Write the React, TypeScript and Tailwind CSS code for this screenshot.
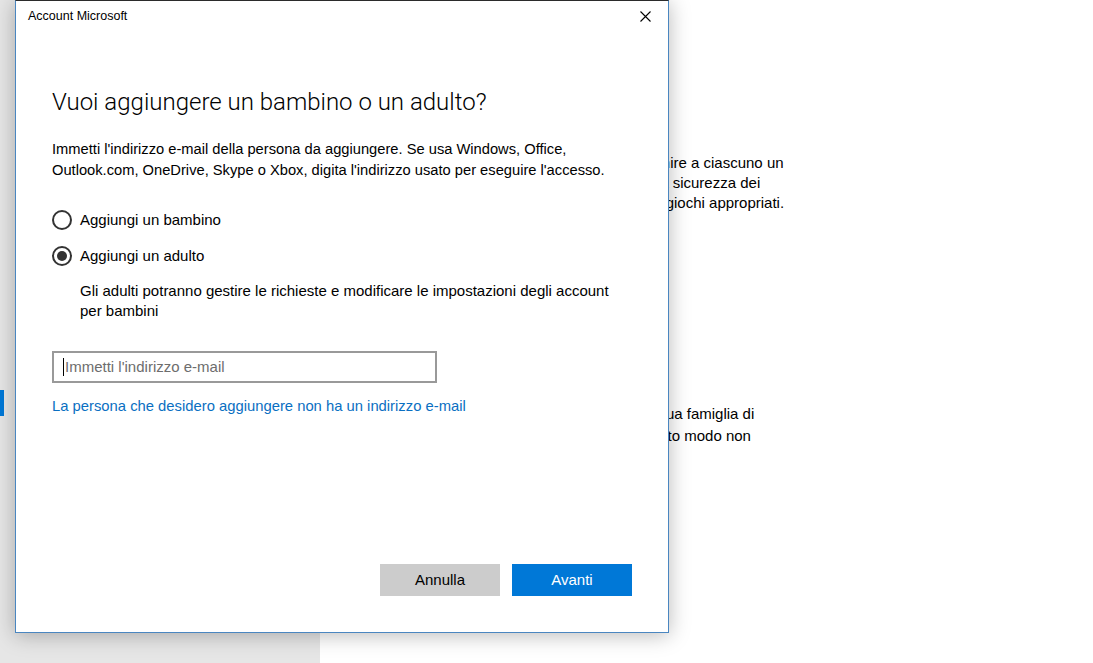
import { useState } from "react";

const font = { fontFamily: '"Segoe UI", "Liberation Sans", Arial, sans-serif' };

function Radio({ checked, label, onSelect }: { checked: boolean; label: string; onSelect: () => void }) {
  return (
    <button onClick={onSelect} className="flex h-[36px] items-center gap-[8px] text-left">
      <span className="flex h-[20px] w-[20px] items-center justify-center rounded-full border-2 border-[#333]">
        {checked && <span className="h-[10px] w-[10px] rounded-full bg-[#333]" />}
      </span>
      <span className="text-[15px] text-black">{label}</span>
    </button>
  );
}

function AccountDialog() {
  const [kind, setKind] = useState<"child" | "adult">("adult");

  return (
    <div className="absolute left-[15px] top-0 flex h-[633px] w-[654px] flex-col border-x border-b border-t border-x-[#4a86c0] border-b-[#4a86c0] border-t-[#2b2b2b] bg-white shadow-[0_2px_20px_rgba(0,0,0,0.28)]">
      {/* title bar */}
      <div className="flex h-[31px] items-center justify-between pl-[12px] pr-[17px]">
        <span className="text-[12.5px] text-black">Account Microsoft</span>
        <svg width="11" height="11" viewBox="0 0 11 11" className="text-black">
          <path d="M0.5 0.5 L10.5 10.5 M10.5 0.5 L0.5 10.5" stroke="currentColor" strokeWidth="1.1" />
        </svg>
      </div>

      <div className="flex flex-1 flex-col px-[36px]">
        <h1
          className="mt-[54px] text-[24px] font-light leading-[32px] text-black"
          style={{ fontFamily: '"Segoe UI Light", Roboto, "Liberation Sans", sans-serif' }}
        >
          Vuoi aggiungere un bambino o un adulto?
        </h1>

        <p className="mt-[21px] text-[14.7px] leading-[21px] text-black">
          Immetti l'indirizzo e-mail della persona da aggiungere. Se usa Windows, Office,
          <br />
          Outlook.com, OneDrive, Skype o Xbox, digita l'indirizzo usato per eseguire l'accesso.
        </p>

        <div className="mt-[21px] flex flex-col">
          <Radio checked={kind === "child"} label="Aggiungi un bambino" onSelect={() => setKind("child")} />
          <Radio checked={kind === "adult"} label="Aggiungi un adulto" onSelect={() => setKind("adult")} />
        </div>

        <p className="ml-[28px] mt-[7px] text-[15px] leading-[20px] text-black">
          Gli adulti potranno gestire le richieste e modificare le impostazioni degli account
          <br />
          per bambini
        </p>

        <div className="mt-[30px] flex h-[32px] w-[385px] items-center border-2 border-[#999] pl-[9px]">
          <span className="mr-[1px] h-[18px] w-[1px] bg-black" />
          <span className="text-[15px] text-[#6d6d6d]">Immetti l'indirizzo e-mail</span>
        </div>

        <a className="mt-[12px] self-start text-[14.8px] text-[#0a6fc2]" href="#">
          La persona che desidero aggiungere non ha un indirizzo e-mail
        </a>

        <div className="mb-[36px] mt-auto flex justify-end gap-[12px]">
          <button className="h-[32px] w-[120px] bg-[#cccccc] text-[15px] text-black">Annulla</button>
          <button className="h-[32px] w-[120px] bg-[#0078d7] text-[15px] text-white">Avanti</button>
        </div>
      </div>
    </div>
  );
}

export default function App() {
  return (
    <div className="relative flex h-[663px] w-full overflow-hidden bg-white" style={font}>
      {/* settings nav */}
      <div className="flex w-[320px] shrink-0 flex-col bg-[#e6e6e6]">
        <div className="mt-[390px] h-[26px] w-[4px] bg-[#0078d7]" />
      </div>

      {/* family settings page, partly under the dialog */}
      <div className="flex flex-col pl-[30px] text-[15px] text-black">
        <p className="mt-[153px] whitespace-nowrap leading-[20px]">
          Aggiungi i membri della famiglia in modo da fornire a ciascuno un
          <br />
          accesso e un desktop personali. Puoi tutelare la sicurezza dei
          <br />
          bambini, con limiti di tempo, siti Web, le app e i giochi appropriati.
        </p>
        <p className="ml-[4px] mt-[190px] whitespace-nowrap leading-[22px]">
          Consenti a persone che non fanno parte della tua famiglia di
          <br />
          accedere con il loro account e desktop. In questo modo non
        </p>
      </div>

      <AccountDialog />
    </div>
  );
}
